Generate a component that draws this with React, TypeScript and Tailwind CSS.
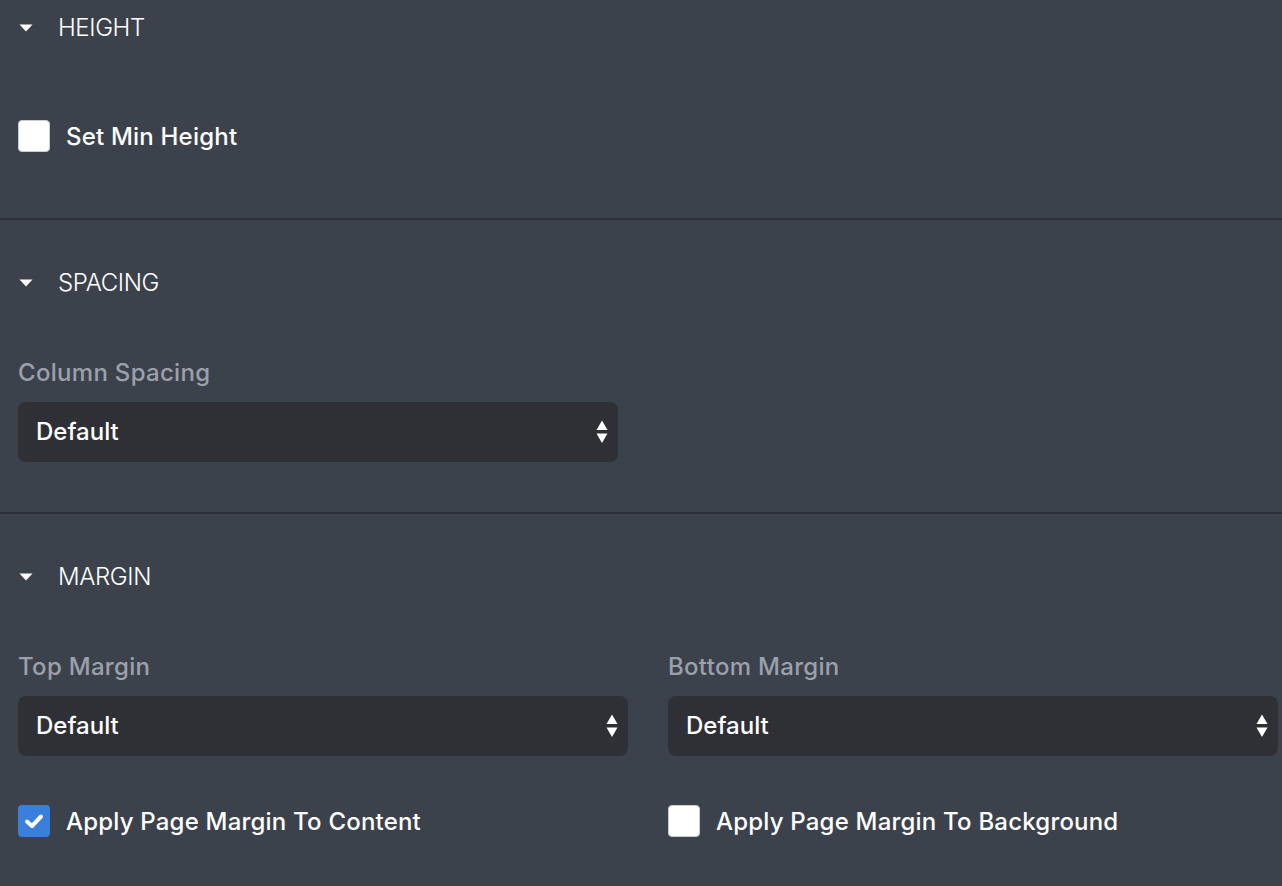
import React from "react";

const Caret = () => (
  <svg width="14" height="8" viewBox="0 0 14 8" className="shrink-0">
    <path d="M0.5 0.5 L13.5 0.5 L7 7.5 Z" fill="#ffffff" />
  </svg>
);

const Header = ({ title }: { title: string }) => (
  <div className="flex h-[56px] items-center">
    <div className="ml-[1px] flex w-[39px] items-center">
      <Caret />
    </div>
    <span
      className="text-[24px] font-light leading-none tracking-[-0.4px] text-white"
      style={{ fontFamily: 'Inter, "Liberation Sans", Arial, sans-serif' }}
    >
      {title}
    </span>
  </div>
);

const Arrows = () => (
  <svg width="12" height="24" viewBox="0 0 12 24" className="shrink-0">
    <path d="M6 0.5 L11.5 10 L0.5 10 Z" fill="#ffffff" />
    <path d="M0.5 13.5 L11.5 13.5 L6 23 Z" fill="#ffffff" />
  </svg>
);

const Select = ({ w }: { w: string }) => (
  <div
    className={`${w} flex h-[60px] items-center justify-between rounded-[8px] bg-[#2e3035] pl-[18px] pr-[10px]`}
  >
    <span className="text-[24px] font-medium leading-none text-white">Default</span>
    <Arrows />
  </div>
);

const Check = ({ checked, label }: { checked?: boolean; label: string }) => (
  <div className="flex items-center">
    {checked ? (
      <div className="flex h-[32px] w-[32px] items-center justify-center rounded-[4px] bg-[#3a7fdb]">
        <svg width="20" height="16" viewBox="0 0 20 16">
          <path
            d="M3 8.5 L8 13 L17 3.5"
            fill="none"
            stroke="#ffffff"
            strokeWidth="4"
            strokeLinecap="round"
            strokeLinejoin="round"
          />
        </svg>
      </div>
    ) : (
      <div className="h-[32px] w-[32px] rounded-[4px] border border-[#c9ccd1] bg-white" />
    )}
    <span className="ml-[16px] mt-[2px] text-[24px] font-medium leading-none tracking-[0.2px] text-white">
      {label}
    </span>
  </div>
);

const Label = ({ text }: { text: string }) => (
  <div className="h-[28px] text-[24px] font-medium leading-[28px] tracking-[0.3px] text-[#9ba1ab]">
    {text}
  </div>
);

const Divider = () => <div className="h-[2px] w-full bg-[#2d3139]" />;

export default function App() {
  return (
    <div
      className="h-[886px] w-[1282px] overflow-hidden bg-[#3c424c]"
      style={{ fontFamily: 'Inter, "Liberation Sans", Arial, sans-serif' }}
    >
      {/* HEIGHT */}
      <div className="px-[18px] pb-[66px]">
        <Header title="HEIGHT" />
        <div className="mt-[64px]">
          <Check label="Set Min Height" />
        </div>
      </div>
      <Divider />
      {/* SPACING */}
      <div className="px-[18px] pt-[35px] pb-[50px]">
        <Header title="SPACING" />
        <div className="mt-[48px]">
          <Label text="Column Spacing" />
        </div>
        <div className="mt-[15px]">
          <Select w="w-[600px]" />
        </div>
      </div>
      <Divider />
      {/* MARGIN */}
      <div className="px-[18px] pt-[35px]">
        <Header title="MARGIN" />
        <div className="mt-[48px] grid grid-cols-[610px_610px] gap-x-[40px]">
          <div>
            <Label text="Top Margin" />
            <div className="mt-[15px]">
              <Select w="w-[610px]" />
            </div>
            <div className="mt-[49px]">
              <Check checked label="Apply Page Margin To Content" />
            </div>
          </div>
          <div>
            <Label text="Bottom Margin" />
            <div className="mt-[15px]">
              <Select w="w-[610px]" />
            </div>
            <div className="mt-[49px]">
              <Check label="Apply Page Margin To Background" />
            </div>
          </div>
        </div>
      </div>
    </div>
  );
}
